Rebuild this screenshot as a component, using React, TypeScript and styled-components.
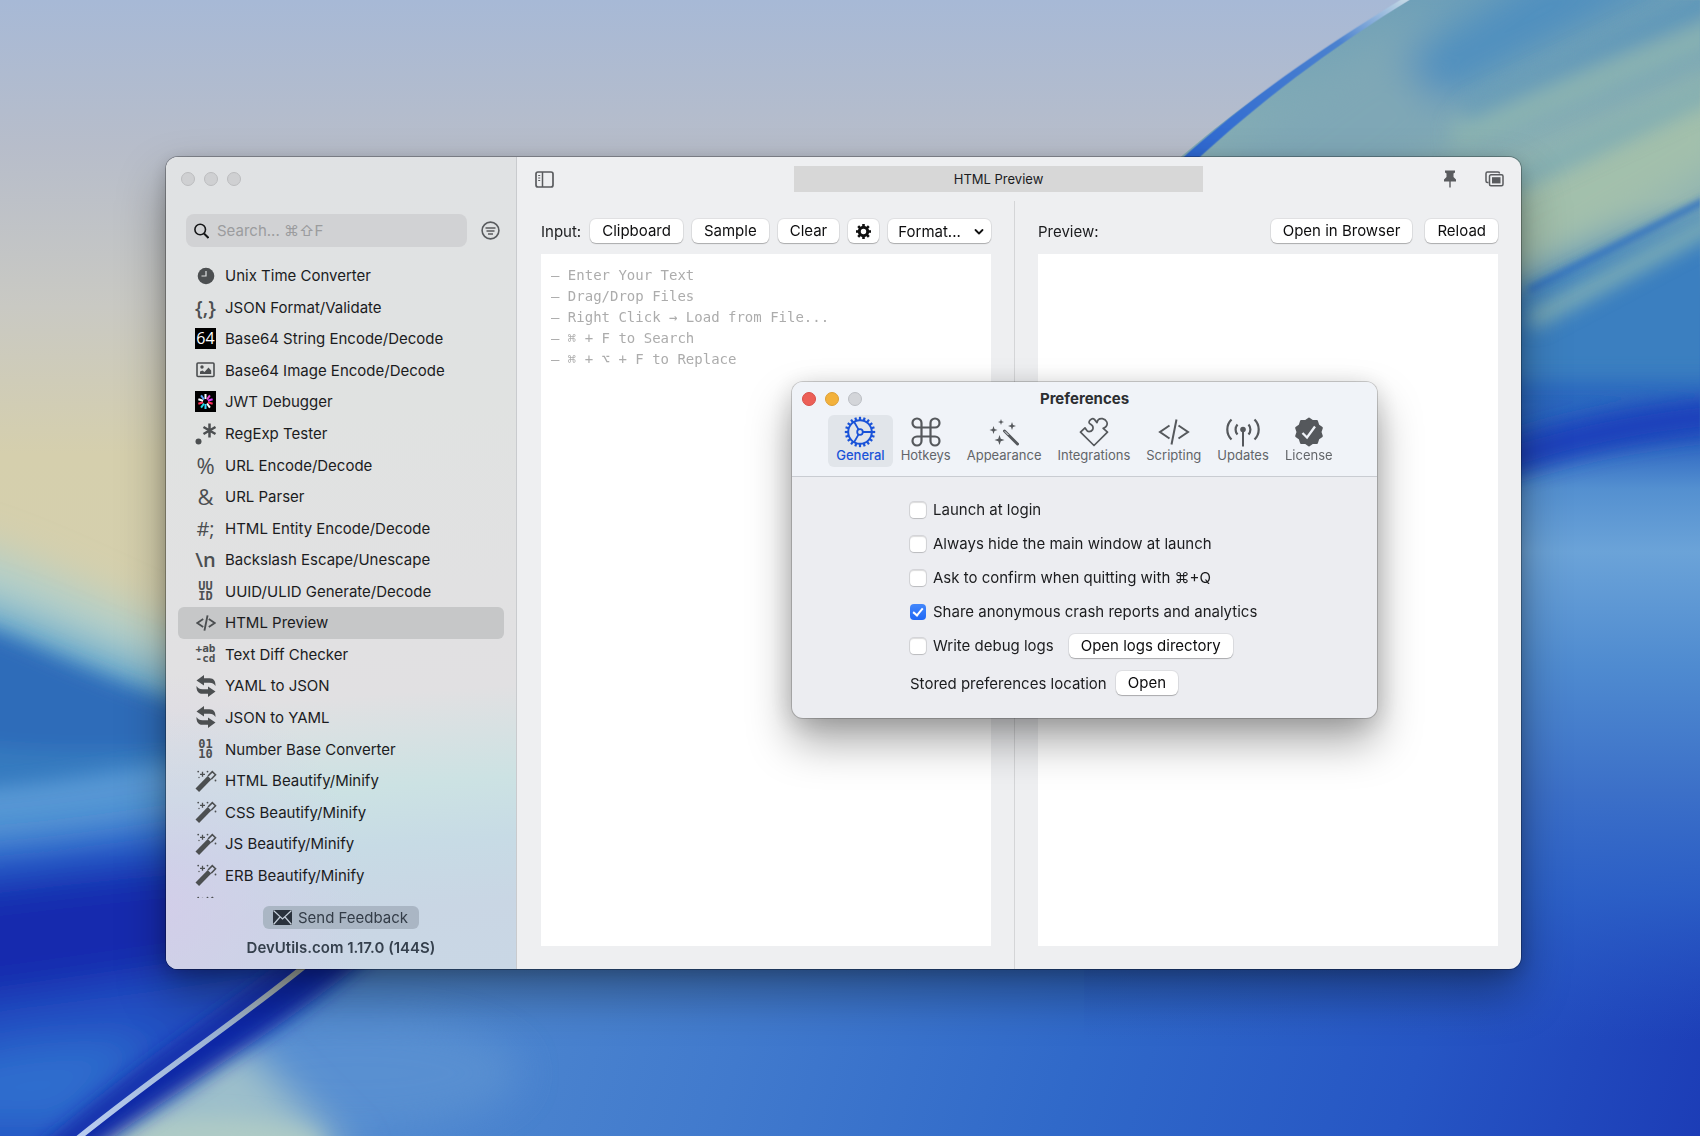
import React, { useState } from 'react';
import styled, { createGlobalStyle, css } from 'styled-components';

const sans = `Inter, "Liberation Sans", "DejaVu Sans", sans-serif`;
const mono = `"DejaVu Sans Mono", "Liberation Mono", monospace`;

const GlobalStyle = createGlobalStyle`
  *, *::before, *::after { box-sizing: border-box; }
  body { margin: 0; font-family: ${sans}; font-size: 15px; color: #1b1c1e; }
  button, input, select, textarea { font: inherit; color: inherit; }
`;

/* ---------- desktop ---------- */

const Desktop = styled.div`
  position: relative;
  display: flex;
  height: 100vh;
  min-height: 900px;
  padding: 157px 179px 167px 166px;
  overflow: hidden;
  background: #3469c4;
`;

const WallpaperSvg = styled.svg`
  position: absolute;
  inset: 0;
  width: 100%;
  height: 100%;
`;

function Wallpaper() {
  return (
    <WallpaperSvg viewBox="0 0 1568 1048" preserveAspectRatio="none" aria-hidden="true">
      <defs>
        <linearGradient id="sky" x1="0" y1="0" x2="0" y2="1">
          <stop offset="0" stopColor="#a7b9d6" />
          <stop offset="0.13" stopColor="#b7bdca" />
          <stop offset="0.27" stopColor="#c9c9c3" />
          <stop offset="0.4" stopColor="#d5cfad" />
          <stop offset="0.6" stopColor="#d5d0ac" />
        </linearGradient>
        <linearGradient id="right" gradientUnits="userSpaceOnUse" x1="1480" y1="0" x2="1480" y2="960">
          <stop offset="0" stopColor="#6fa0b8" />
          <stop offset="0.19" stopColor="#8fb3b3" />
          <stop offset="0.27" stopColor="#3f80bd" />
          <stop offset="0.37" stopColor="#2c6abf" />
          <stop offset="0.42" stopColor="#2a62c0" />
          <stop offset="0.47" stopColor="#5490d0" />
          <stop offset="0.53" stopColor="#6ba3d8" />
          <stop offset="0.64" stopColor="#4f8bd0" />
          <stop offset="0.76" stopColor="#3c70c8" />
          <stop offset="0.86" stopColor="#2e64c8" stopOpacity="0.8" />
          <stop offset="1" stopColor="#2858c4" stopOpacity="0" />
        </linearGradient>
        <linearGradient id="floor" gradientUnits="userSpaceOnUse" x1="420" y1="800" x2="1568" y2="1150">
          <stop offset="0" stopColor="#4f88cf" />
          <stop offset="0.25" stopColor="#417acd" />
          <stop offset="0.5" stopColor="#3069c9" />
          <stop offset="0.75" stopColor="#2656c4" />
          <stop offset="1" stopColor="#1b3ab5" />
        </linearGradient>
        <linearGradient id="ridge" x1="0" y1="1" x2="1" y2="0">
          <stop offset="0" stopColor="#2c66d2" />
          <stop offset="0.7" stopColor="#4b82cf" />
          <stop offset="1" stopColor="#d3e4e8" />
        </linearGradient>
        <linearGradient id="thread" x1="1" y1="0" x2="0" y2="1">
          <stop offset="0" stopColor="#a9aea0" />
          <stop offset="0.4" stopColor="#9bb3d4" />
          <stop offset="1" stopColor="#b9cdf0" />
        </linearGradient>
        <filter id="b3" x="-20%" y="-20%" width="140%" height="140%"><feGaussianBlur stdDeviation="3" /></filter>
        <filter id="b9" x="-30%" y="-60%" width="160%" height="220%"><feGaussianBlur stdDeviation="9" /></filter>
        <filter id="b18" x="-40%" y="-80%" width="180%" height="260%"><feGaussianBlur stdDeviation="18" /></filter>
        <clipPath id="rightClip">
          <path d="M1300 0C1215 50 1150 92 1090 144L700 600V1048H1568V0Z" />
        </clipPath>
        <clipPath id="floorClip">
          <path d="M72 1048C150 985 215 945 280 892L500 700H1568V1048Z" />
        </clipPath>
      </defs>

      <rect width="1568" height="1048" fill="url(#sky)" />

      {/* waves along the left edge */}
      <g filter="url(#b18)">
        <path d="M-60 492C20 510 90 552 220 606V1150H-60Z" fill="#b3cfc9" />
      </g>
      <g filter="url(#b18)">
        <path d="M-60 546C20 562 90 608 220 645V1150H-60Z" fill="#5fa3cc" />
      </g>
      <g filter="url(#b9)">
        <path d="M-60 566C10 578 90 634 240 670V1150H-60Z" fill="#2f6cb9" />
        <path d="M-60 680C40 700 120 690 240 690V1150H-60Z" fill="#357abf" />
      </g>
      <g filter="url(#b9)">
        <path d="M-60 728C40 728 100 708 240 695V1150H-60Z" fill="#5797d4" />
      </g>
      <g filter="url(#b18)">
        <path d="M-60 786C40 780 120 768 240 750V1150H-60Z" fill="#2458c8" />
        <path d="M-60 818C40 810 120 792 400 780V1150H-60Z" fill="#142cae" />
        <path d="M-60 930C40 918 120 905 300 880V1150H-60Z" fill="#2150c2" />
        <path d="M-60 990C0 960 50 960 140 960L60 1040H-60Z" fill="#2d6dce" />
      </g>
      <path d="M40 1070C130 992 200 950 290 880" stroke="#1227a4" strokeWidth="16" fill="none" filter="url(#b9)" />

      {/* broad floor below the thread */}
      <g clipPath="url(#floorClip)">
        <rect y="600" width="1568" height="448" fill="url(#floor)" />
        <ellipse cx="330" cy="990" rx="150" ry="50" fill="#5b92d2" opacity="0.8" filter="url(#b18)" />
        <path d="M60 1060L215 955L330 1070Z" fill="#9dbfcb" filter="url(#b18)" />
        <ellipse cx="190" cy="1056" rx="110" ry="26" fill="#afcbc6" filter="url(#b9)" />
        <path d="M60 1054C150 985 240 940 345 850" stroke="#1128a6" strokeWidth="44" fill="none" filter="url(#b9)" />
      </g>
      <path d="M72 1050C150 987 215 945 285 888" stroke="url(#thread)" strokeWidth="5" fill="none" />

      {/* upper right fold */}
      <g clipPath="url(#rightClip)">
        <rect x="1000" width="568" height="960" fill="url(#right)" />
        <g filter="url(#b18)">
          <path d="M1060 190L1300 20L1350 120L1100 300Z" fill="#7fa7b6" />
          <path d="M1290 55L1430 -30H1560L1330 95Z" fill="#4f8fbf" />
          <path d="M1370 175L1600 60V150L1370 280Z" fill="#a3c0ac" />
        </g>
        <g filter="url(#b9)">
          <path d="M1340 112L1600 10V34L1340 140Z" fill="#8db5b0" opacity="0.8" />
          <path d="M1350 98L1600 -20V4L1350 112Z" fill="#5793ba" opacity="0.8" />
          <path d="M1380 165L1600 66V82L1380 185Z" fill="#79a9b4" opacity="0.8" />
          <path d="M1390 285L1600 180V350L1390 350Z" fill="#3a7fc0" />
          <path d="M1380 426C1450 402 1520 388 1600 382" stroke="#1c42bb" strokeWidth="34" fill="none" />
        </g>
        <path d="M1410 296L1590 200" stroke="#86b3b4" strokeWidth="16" fill="none" filter="url(#b9)" />
        <path d="M1410 268L1590 176" stroke="#3674c0" strokeWidth="6" fill="none" filter="url(#b3)" />
      </g>
      <path d="M1086 150C1150 92 1215 47 1298 -4H1306C1222 48 1162 94 1101 150Z" fill="url(#ridge)" />
    </WallpaperSvg>
  );
}

/* ---------- shared controls ---------- */

const raised = css`
  border: 0;
  border-radius: 6px;
  background: #fff;
  box-shadow: 0 0 0 1px rgba(0, 0, 0, 0.06), 0 1px 1px rgba(0, 0, 0, 0.24);
`;

const PushButton = styled.button<{ $square?: boolean }>`
  ${raised}
  display: inline-flex;
  align-items: center;
  justify-content: center;
  flex: none;
  height: 24px;
  padding: 0 ${(p) => (p.$square ? 7 : 12)}px;
  color: #0d0d0e;
  line-height: 24px;
  white-space: nowrap;
`;

const SelectWrap = styled.label`
  position: relative;
  display: block;
  flex: 1;
  svg {
    position: absolute;
    right: 7px;
    top: 9px;
    pointer-events: none;
  }
`;

const Select = styled.select`
  ${raised}
  appearance: none;
  display: block;
  width: 100%;
  height: 24px;
  padding: 0 24px 0 10px;
  color: #0d0d0e;
`;

const Lights = styled.div`
  display: flex;
  gap: 9px;
`;

const Light = styled.button<{ $fill: string; $edge: string }>`
  width: 14px;
  height: 14px;
  padding: 0;
  border: 1px solid ${(p) => p.$edge};
  border-radius: 50%;
  background: ${(p) => p.$fill};
`;

const IconButton = styled.button`
  display: inline-flex;
  align-items: center;
  justify-content: center;
  padding: 0;
  border: 0;
  background: none;
  color: #595b5e;
`;

/* ---------- main window ---------- */

const Window = styled.main`
  position: relative;
  display: flex;
  flex: 1;
  min-width: 0;
  border-radius: 12px;
  overflow: hidden;
  background: #eeeff1;
`;

const WindowFrame = styled.div`
  display: flex;
  flex: 1;
  min-width: 0;
  border-radius: 12px;
  box-shadow: 0 0 0 1px rgba(0, 0, 0, 0.28), 0 24px 48px rgba(0, 0, 0, 0.36), 0 4px 18px rgba(0, 0, 0, 0.18);
  position: relative;
`;

const Sidebar = styled.aside`
  display: flex;
  flex-direction: column;
  flex: none;
  width: 351px;
  border-right: 1px solid #c9cbce;
  background:
    radial-gradient(ellipse 200px 230px at 0 92%, rgba(212, 204, 234, 0.8), rgba(212, 204, 234, 0)),
    linear-gradient(176deg, #e0e2e4 0%, #e0e2e1 32%, #e1e1e2 54%, #e1e0e2 66%, #cce2e3 77%, #c7dbe5 84%, #c9d6e4 92%, #c9d7e5 100%);
`;

const SidebarTop = styled.div`
  height: 57px;
  padding: 15px 15px 0;
`;

const SearchRow = styled.div`
  display: flex;
  align-items: center;
  justify-content: space-between;
  padding: 0 16px 0 20px;
`;

const SearchBox = styled.label`
  display: flex;
  align-items: center;
  gap: 8px;
  width: 281px;
  height: 33px;
  padding: 0 8px;
  border-radius: 8px;
  background: #d1d2d4;
  color: #151617;
`;

const SearchInput = styled.input`
  flex: 1;
  min-width: 0;
  padding: 0;
  border: 0;
  outline: 0;
  background: none;
  &::placeholder { color: #9b9c9e; opacity: 1; }
`;

const ToolList = styled.ul`
  display: grid;
  grid-template-rows: repeat(20, 1fr) 7px;
  flex: 1;
  min-height: 0;
  margin: 13px 0 0;
  padding: 0 12px;
  overflow: hidden;
  list-style: none;
`;

const ToolItem = styled.li`
  display: grid;
  min-height: 0;
`;

const ToolButton = styled.button<{ $active?: boolean }>`
  display: flex;
  align-items: center;
  gap: 8px;
  min-width: 0;
  padding: 0 16px;
  border: 0;
  border-radius: 6px;
  background: ${(p) => (p.$active ? '#c6c7c8' : 'transparent')};
  text-align: left;
  white-space: nowrap;
`;

const PeekButton = styled(ToolButton)`
  align-items: flex-start;
  height: 31px;
  padding-top: 5px;
`;

const IconSlot = styled.span`
  display: flex;
  align-items: center;
  justify-content: center;
  flex: none;
  width: 23px;
  height: 22px;
  color: #4c4f51;
`;

const Glyph = styled.span<{ $size: number; $weight?: number; $mono?: boolean; $stack?: boolean; $invert?: boolean }>`
  display: block;
  font-family: ${(p) => (p.$mono ? mono : `"Open Sans", ${sans}`)};
  font-size: ${(p) => p.$size}px;
  font-weight: ${(p) => p.$weight || 400};
  line-height: ${(p) => (p.$stack ? 10 : 21)}px;
  white-space: pre;
  text-align: center;
  ${(p) => p.$invert && css`
    width: 21px;
    height: 21px;
    background: #000;
    color: #fff;
  `}
`;

const SidebarFooter = styled.footer`
  display: flex;
  flex-direction: column;
  align-items: center;
  height: 71px;
  padding: 8px 0 0;
`;

const FeedbackButton = styled.button`
  display: flex;
  align-items: center;
  gap: 6px;
  height: 23px;
  margin-bottom: 9px;
  padding: 0 11px 0 10px;
  border: 0;
  border-radius: 6px;
  background: #aab6c4;
  color: #333c47;
`;

const Version = styled.a`
  color: #35404d;
  font-size: 15px;
  font-weight: 600;
  line-height: 20px;
  text-decoration: none;
`;

const Workspace = styled.section`
  display: flex;
  flex-direction: column;
  flex: 1;
  min-width: 0;
`;

const Toolbar = styled.header`
  display: flex;
  align-items: center;
  justify-content: space-between;
  height: 44px;
  padding: 0 17px 0 18px;
`;

const TitleTab = styled.h1`
  width: 409px;
  margin: 0;
  background: #d7d7d7;
  font-size: 13px;
  font-weight: 400;
  line-height: 26px;
  text-align: center;
`;

const ToolbarActions = styled.div`
  display: flex;
  align-items: center;
  gap: 28px;
`;

const Panes = styled.div`
  display: grid;
  grid-template-columns: 497fr 507fr;
  flex: 1;
  min-height: 0;
`;

const Pane = styled.section<{ $divided?: boolean }>`
  display: flex;
  flex-direction: column;
  gap: 11px;
  min-width: 0;
  padding: 18px 23px 23px ${(p) => (p.$divided ? 23 : 24)}px;
  border-left: ${(p) => (p.$divided ? '1px solid #d4d5d7' : '0')};
`;

const PaneControls = styled.div<{ $gap: number }>`
  display: flex;
  align-items: center;
  gap: ${(p) => p.$gap}px;
  height: 24px;
`;

const PaneLabel = styled.label<{ $grow?: boolean }>`
  flex: ${(p) => (p.$grow ? 1 : 'none')};
  padding-top: 1px;
`;

const InputArea = styled.textarea`
  flex: 1;
  width: 100%;
  padding: 11px 10px;
  border: 0;
  outline: 0;
  resize: none;
  background: #fff;
  font-family: ${mono};
  font-size: 14px;
  line-height: 21px;
  &::placeholder { color: #acacac; opacity: 1; }
`;

const PreviewArea = styled.output`
  display: block;
  flex: 1;
  background: #fff;
`;

/* ---------- preferences window ---------- */

const Dialog = styled.section`
  position: absolute;
  left: 792px;
  top: 382px;
  width: 585px;
  border-radius: 11px;
  box-shadow: 0 0 0 1px rgba(0, 0, 0, 0.18), 0 24px 44px rgba(0, 0, 0, 0.34), 0 4px 26px rgba(0, 0, 0, 0.16);
  background: #ecedf1;
`;

const DialogHeader = styled.header`
  border-bottom: 1px solid #c9ccd2;
  border-radius: 11px 11px 0 0;
  background: #f0f3f8;
`;

const DialogTitleBar = styled.div`
  display: grid;
  grid-template-columns: 1fr auto 1fr;
  align-items: center;
  height: 33px;
  padding: 0 10px;
`;

const DialogTitle = styled.h2`
  margin: 0;
  color: #2c2e31;
  font-size: 15px;
  font-weight: 700;
  line-height: 20px;
`;

const Tabs = styled.nav`
  display: flex;
  justify-content: center;
  padding-bottom: 9px;
`;

const Tab = styled.button<{ $active?: boolean }>`
  display: flex;
  flex-direction: column;
  align-items: center;
  min-width: 64px;
  height: 52px;
  padding: 1px 8px 0;
  border: 0;
  border-radius: 6px;
  background: ${(p) => (p.$active ? '#e1e5ea' : 'transparent')};
  color: ${(p) => (p.$active ? '#1a53d8' : '#626569')};
  font-size: 13px;
  font-weight: ${(p) => (p.$active ? 500 : 400)};
  line-height: 14px;
  svg { color: ${(p) => (p.$active ? '#1a53d8' : '#55585c')}; }
`;

const TabIcon = styled.span`
  display: flex;
  align-items: center;
  justify-content: center;
  height: 32px;
`;

const DialogBody = styled.div`
  padding: 16px 24px 18px 118px;
`;

const PrefRow = styled.div<{ $last?: boolean }>`
  display: flex;
  align-items: center;
  gap: ${(p) => (p.$last ? 9 : 15)}px;
  height: 34px;
  margin-top: ${(p) => (p.$last ? 3 : 0)}px;
`;

const CheckLabel = styled.label`
  display: flex;
  align-items: center;
  gap: 7px;
  line-height: 20px;
`;

const Checkbox = styled.input`
  appearance: none;
  position: relative;
  width: 16px;
  height: 16px;
  margin: 0;
  border-radius: 4px;
  background: #fff;
  box-shadow: 0 0 0 1px rgba(0, 0, 0, 0.1), 0 1px 1px rgba(0, 0, 0, 0.12), inset 0 1px 1px rgba(0, 0, 0, 0.14);
  &:checked {
    background: linear-gradient(#4387fb, #1f68f5);
    box-shadow: none;
  }
  &:checked::before {
    content: '';
    position: absolute;
    left: 5px;
    top: 2px;
    width: 6px;
    height: 10px;
    border: solid #fff;
    border-width: 0 2px 2px 0;
    transform: rotate(40deg);
  }
`;

/* ---------- icons ---------- */

const ClockIcon = () => (
  <svg width="18" height="18" viewBox="0 0 18 18">
    <circle cx="9" cy="9" r="8.300" fill="currentColor" />
    <path d="M9 4v5H4.500" fill="none" stroke="#dfe1e2" strokeWidth="1.200" />
  </svg>
);

const PictureIcon = () => (
  <svg width="19" height="16" viewBox="0 0 19 16">
    <rect x="1" y="1" width="17" height="13.500" rx="1" fill="none" stroke="currentColor" strokeWidth="1.600" />
    <circle cx="6" cy="5" r="1.700" fill="currentColor" />
    <path d="M4 12V9.500L6.500 8.500 8.500 10 12.500 5.500 15.200 8.500V12Z" fill="currentColor" />
  </svg>
);

const jwtColors = ['#ffffff', '#f04bd8', '#d93bff', '#ff2f55', '#ffffff', '#38d5ff', '#20e0e8', '#ff2f55', '#ffffff', '#5aa8ff'];
const JwtIcon = () => (
  <svg width="21" height="21" viewBox="0 0 21 21">
    <rect width="21" height="21" fill="#000" />
    {jwtColors.map((c, i) => (
      <path key={i} d="M10.500 3v5" stroke={c} strokeWidth="2" transform={`rotate(${i * 36} 10.500 10.500)`} />
    ))}
  </svg>
);

const RegexIcon = () => (
  <svg width="22" height="22" viewBox="0 0 22 22">
    <circle cx="3.500" cy="18.500" r="3" fill="currentColor" />
    <g stroke="currentColor" strokeWidth="2.500">
      <path d="M14.500 0.500v14M8.500 4l12 7M20.500 4l-12 7" />
    </g>
  </svg>
);

const CodeIcon = ({ w, h, s }: { w: number; h: number; s: number }) => (
  <svg width={w} height={h} viewBox="0 0 32 26" preserveAspectRatio="none">
    <path d="M11.500 6.500L2 13l9.500 6.500M20.500 6.500l9.500 6.500-9.500 6.500M18.500 0.500L13.500 25.500" fill="none" stroke="currentColor" strokeWidth={s} />
  </svg>
);

const swapArrow = 'M0.500 5.500L8 0V3.200H13.500C18 3.200 19.700 6.500 19.500 11C17.800 8.500 16.500 7.800 13.500 7.800H8V10.500Z';
const SwapIcon = () => (
  <svg width="20" height="22" viewBox="0 0 20 22" fill="currentColor">
    <path d={swapArrow} />
    <path d={swapArrow} transform="rotate(180 10 11)" />
  </svg>
);

const WandIcon = () => (
  <svg width="22" height="22" viewBox="0 0 22 22">
    <path d="M2.300 20.200L14.500 7.800" stroke="currentColor" strokeWidth="5" />
    <path d="M13 6L17.300 1.600 20.500 4.700 16.200 9.200" fill="none" stroke="currentColor" strokeWidth="1.600" />
    <path d="M7.500 1.800v5M5 4.300h5" stroke="currentColor" strokeWidth="1.300" />
    <g fill="currentColor">
      <circle cx="3.200" cy="1.600" r="0.900" /><circle cx="12.500" cy="1.600" r="0.900" />
      <circle cx="20.500" cy="10.500" r="0.900" /><circle cx="4" cy="7.500" r="0.700" />
    </g>
  </svg>
);

const SearchIcon = () => (
  <svg width="15" height="16" viewBox="0 0 15 16" fill="none" stroke="currentColor" strokeWidth="1.600">
    <circle cx="6.200" cy="6.500" r="5.300" />
    <path d="M10 10.500L14.500 15" strokeWidth="2" />
  </svg>
);

const FilterIcon = () => (
  <svg width="19" height="19" viewBox="0 0 19 19" fill="none" stroke="currentColor" strokeWidth="1.600">
    <circle cx="9.500" cy="9.500" r="8.400" />
    <path d="M4.500 7h10M5.500 10h8M7 13h5" />
  </svg>
);

const MailIcon = () => (
  <svg width="19" height="15" viewBox="0 0 19 15">
    <rect width="19" height="15" fill="#2a323c" />
    <path d="M0.500 0.500L9.500 9 18.500 0.500M0.500 14.500L7 7M18.500 14.500L12 7" fill="none" stroke="#c4ced9" strokeWidth="1.200" />
  </svg>
);

const PanelIcon = () => (
  <svg width="19" height="17" viewBox="0 0 19 17" fill="none" stroke="currentColor">
    <rect x="1" y="1" width="17" height="15" rx="2" strokeWidth="1.700" />
    <path d="M7.500 1v15" strokeWidth="1.500" />
    <path d="M3.200 4.500h2M3.200 7h2M3.200 9.500h2" strokeWidth="1.100" />
  </svg>
);

const PinIcon = () => (
  <svg width="14" height="18" viewBox="0 0 14 18" fill="currentColor">
    <path d="M2 0.500H12V2.500L10.500 3.500V7L13 9.500V11.500H1V9.500L3.500 7V3.500L2 2.500Z" />
    <path d="M6.300 11H7.700V17L7 18 6.300 17Z" />
  </svg>
);

const StackIcon = () => (
  <svg width="19" height="16" viewBox="0 0 19 16" fill="none" stroke="currentColor" strokeWidth="1.500">
    <path d="M3.500 11.500H2.500A1.500 1.500 0 0 1 1 10V2.500A1.500 1.500 0 0 1 2.500 1H13A1.500 1.500 0 0 1 14.500 2.500" />
    <rect x="4.500" y="3.800" width="13.500" height="11" rx="1.500" />
    <rect x="7" y="6.200" width="8.500" height="6.200" fill="currentColor" stroke="none" />
  </svg>
);

const GearIcon = () => (
  <svg width="17" height="17" viewBox="0 0 17 17">
    <circle cx="8.500" cy="8.500" r="4.200" fill="none" stroke="#111" strokeWidth="3" />
    {[0, 45, 90, 135, 180, 225, 270, 315].map((a) => (
      <path key={a} d="M8.500 1V4" stroke="#111" strokeWidth="2.600" transform={`rotate(${a} 8.500 8.500)`} />
    ))}
  </svg>
);

const ChevronIcon = () => (
  <svg width="10" height="8" viewBox="0 0 10 8" fill="none" stroke="#111" strokeWidth="1.800" strokeLinecap="round" strokeLinejoin="round">
    <path d="M1.500 2L5 5.500 8.500 2" />
  </svg>
);

const CogIcon = () => (
  <svg width="32" height="32" viewBox="0 0 32 32" fill="none" stroke="currentColor">
    <circle cx="16" cy="16" r="11.800" strokeWidth="2" />
    {Array.from({ length: 20 }, (_, i) => (
      <path key={i} d="M16 0.800V4" strokeWidth="2.200" transform={`rotate(${i * 18} 16 16)`} />
    ))}
    <circle cx="16" cy="16" r="2.800" strokeWidth="1.800" />
    <path d="M18.800 16H27.500M14.600 13.600L10.200 6M14.600 18.400L10.200 26" strokeWidth="1.800" />
  </svg>
);

const CommandIcon = () => (
  <svg width="30" height="30" viewBox="0 0 30 30" fill="none" stroke="currentColor" strokeWidth="2.200">
    <path d="M10.500 6v18a4.500 4.500 0 1 1-4.500-4.500h18a4.500 4.500 0 1 1-4.500 4.500V6a4.500 4.500 0 1 1 4.500 4.500H6A4.500 4.500 0 1 1 10.500 6Z" />
  </svg>
);

const star = (x: number, y: number, r: number) => {
  const k = r / 4;
  return `M${x} ${y - r}L${x + k} ${y - k}L${x + r} ${y}L${x + k} ${y + k}L${x} ${y + r}L${x - k} ${y + k}L${x - r} ${y}L${x - k} ${y - k}Z`;
};
const SparkleWandIcon = () => (
  <svg width="30" height="30" viewBox="0 0 30 30">
    <path d={`${star(4.5, 13, 4)}${star(12, 5, 3)}${star(23, 9, 4)}${star(10.5, 23, 5)}`} fill="currentColor" />
    <path d="M15.500 14L28.500 27" stroke="currentColor" strokeWidth="3" strokeLinecap="round" />
    <path d="M15.800 14.300L19.500 18" stroke="#f0f3f8" strokeWidth="1" />
  </svg>
);

const PuzzleIcon = () => (
  <svg width="30" height="30" viewBox="0 0 30 30" fill="none" stroke="currentColor" strokeWidth="1.700" strokeLinejoin="round">
    <path d="M15 28.500L1.500 15.200 6 10.800C7 12 7.600 14.600 10 14.600C13.400 14.600 15 11.500 13.400 8.800C12.400 7.200 10 7 10 5.200C10.400 2.600 13.600 0.700 15.400 2.400L18 5.600C18.400 3 20.500 1.200 23.400 1.600C27.600 2.400 29.400 6.600 27.200 9.400C26.300 10.500 25.300 11 24.200 11.400L28.500 15.200Z" />
  </svg>
);

const AntennaIcon = () => (
  <svg width="34" height="30" viewBox="0 0 34 30" fill="none" stroke="currentColor" strokeWidth="2.200">
    <circle cx="17" cy="12.500" r="2.800" fill="currentColor" stroke="none" />
    <path d="M17 13V29.500" strokeWidth="2" />
    <path d="M11.500 7.500A7.500 7.500 0 0 0 11.500 17.500M22.500 7.500A7.500 7.500 0 0 1 22.500 17.500M5.500 2.500A14 14 0 0 0 5.500 22.500M28.500 2.500A14 14 0 0 1 28.500 22.500" />
  </svg>
);

const badgePath = Array.from({ length: 20 }, (_, i) => {
  const a = (i * Math.PI) / 10 - Math.PI / 2;
  const r = i % 2 ? 11.5 : 13.5;
  return `${i ? 'L' : 'M'}${15 + r * Math.cos(a)} ${15 + r * Math.sin(a)}`;
}).join('') + 'Z';
const BadgeIcon = () => (
  <svg width="30" height="30" viewBox="0 0 30 30">
    <path d={badgePath} fill="currentColor" stroke="currentColor" strokeWidth="2" strokeLinejoin="round" />
    <path d="M8.500 16L13 20.500 21 9.500" fill="none" stroke="#f0f3f8" strokeWidth="2.300" />
  </svg>
);

/* ---------- content ---------- */

const tools: { name: string; icon: React.ReactNode }[] = [
  { name: 'Unix Time Converter', icon: <ClockIcon /> },
  { name: 'JSON Format/Validate', icon: <Glyph $size={20} $weight={600}>{'{,}'}</Glyph> },
  { name: 'Base64 String Encode/Decode', icon: <Glyph $size={16} $invert>64</Glyph> },
  { name: 'Base64 Image Encode/Decode', icon: <PictureIcon /> },
  { name: 'JWT Debugger', icon: <JwtIcon /> },
  { name: 'RegExp Tester', icon: <RegexIcon /> },
  { name: 'URL Encode/Decode', icon: <Glyph $size={22}>%</Glyph> },
  { name: 'URL Parser', icon: <Glyph $size={22}>&amp;</Glyph> },
  { name: 'HTML Entity Encode/Decode', icon: <Glyph $size={20}>#;</Glyph> },
  { name: 'Backslash Escape/Unescape', icon: <Glyph $size={20} $weight={600}>\n</Glyph> },
  { name: 'UUID/ULID Generate/Decode', icon: <Glyph $size={12} $weight={700} $mono $stack>{'UU\nID'}</Glyph> },
  { name: 'HTML Preview', icon: <CodeIcon w={20} h={16} s={3} /> },
  { name: 'Text Diff Checker', icon: <Glyph $size={11} $weight={700} $mono $stack>{'+ab\n-cd'}</Glyph> },
  { name: 'YAML to JSON', icon: <SwapIcon /> },
  { name: 'JSON to YAML', icon: <SwapIcon /> },
  { name: 'Number Base Converter', icon: <Glyph $size={12} $weight={700} $mono $stack>{'01\n10'}</Glyph> },
  { name: 'HTML Beautify/Minify', icon: <WandIcon /> },
  { name: 'CSS Beautify/Minify', icon: <WandIcon /> },
  { name: 'JS Beautify/Minify', icon: <WandIcon /> },
  { name: 'ERB Beautify/Minify', icon: <WandIcon /> },
];

const prefTabs = [
  { name: 'General', icon: <CogIcon /> },
  { name: 'Hotkeys', icon: <CommandIcon /> },
  { name: 'Appearance', icon: <SparkleWandIcon /> },
  { name: 'Integrations', icon: <PuzzleIcon /> },
  { name: 'Scripting', icon: <CodeIcon w={32} h={26} s={2} /> },
  { name: 'Updates', icon: <AntennaIcon /> },
  { name: 'License', icon: <BadgeIcon /> },
];

const options = [
  { id: 'login', label: 'Launch at login', on: false },
  { id: 'hide', label: 'Always hide the main window at launch', on: false },
  { id: 'quit', label: 'Ask to confirm when quitting with ⌘+Q', on: false },
  { id: 'share', label: 'Share anonymous crash reports and analytics', on: true },
  { id: 'debug', label: 'Write debug logs', on: false },
];

const placeholder = [
  '— Enter Your Text',
  '— Drag/Drop Files',
  '— Right Click → Load from File...',
  '— ⌘ + F to Search',
  '— ⌘ + ⌥ + F to Replace',
].join('\n');

function Preferences() {
  const [tab, setTab] = useState('General');
  return (
    <Dialog role="dialog" aria-labelledby="prefs-title">
      <DialogHeader>
        <DialogTitleBar>
          <Lights>
            <Light aria-label="Close preferences" $fill="#ec5f57" $edge="#d84f48" />
            <Light aria-label="Minimize preferences" $fill="#f3b13b" $edge="#dc9f35" />
            <Light aria-label="Zoom preferences" $fill="#d3d5d9" $edge="#bcbfc4" />
          </Lights>
          <DialogTitle id="prefs-title">Preferences</DialogTitle>
        </DialogTitleBar>
        <Tabs>
          {prefTabs.map((t) => (
            <Tab key={t.name} $active={t.name === tab} onClick={() => setTab(t.name)}>
              <TabIcon>{t.icon}</TabIcon>
              {t.name}
            </Tab>
          ))}
        </Tabs>
      </DialogHeader>
      <DialogBody>
        {options.map((o) => (
          <PrefRow key={o.id}>
            <CheckLabel htmlFor={o.id}>
              <Checkbox type="checkbox" id={o.id} defaultChecked={o.on} />
              {o.label}
            </CheckLabel>
            {o.id === 'debug' && <PushButton>Open logs directory</PushButton>}
          </PrefRow>
        ))}
        <PrefRow $last>
          <span>Stored preferences location</span>
          <PushButton>Open</PushButton>
        </PrefRow>
      </DialogBody>
    </Dialog>
  );
}

export default function App() {
  const [active, setActive] = useState('HTML Preview');
  return (
    <Desktop>
      <GlobalStyle />
      <Wallpaper />
      <WindowFrame>
        <Window>
          <Sidebar>
            <SidebarTop>
              <Lights>
                <Light aria-label="Close" $fill="#cfd0d2" $edge="#bcbdbf" />
                <Light aria-label="Minimize" $fill="#cfd0d2" $edge="#bcbdbf" />
                <Light aria-label="Zoom" $fill="#cfd0d2" $edge="#bcbdbf" />
              </Lights>
            </SidebarTop>
            <SearchRow>
              <SearchBox>
                <SearchIcon />
                <SearchInput type="text" aria-label="Search tools" placeholder="Search... ⌘⇧F" />
              </SearchBox>
              <IconButton aria-label="Filter"><FilterIcon /></IconButton>
            </SearchRow>
            <ToolList>
              {tools.map((t) => (
                <ToolItem key={t.name}>
                  <ToolButton $active={t.name === active} onClick={() => setActive(t.name)}>
                    <IconSlot>{t.icon}</IconSlot>
                    {t.name}
                  </ToolButton>
                </ToolItem>
              ))}
              <ToolItem>
                <PeekButton aria-label="More tools">
                  <IconSlot><WandIcon /></IconSlot>
                </PeekButton>
              </ToolItem>
            </ToolList>
            <SidebarFooter>
              <FeedbackButton><MailIcon />Send Feedback</FeedbackButton>
              <Version href="#about">DevUtils.com 1.17.0 (144S)</Version>
            </SidebarFooter>
          </Sidebar>

          <Workspace>
            <Toolbar>
              <IconButton aria-label="Toggle sidebar"><PanelIcon /></IconButton>
              <TitleTab>HTML Preview</TitleTab>
              <ToolbarActions>
                <IconButton aria-label="Pin window"><PinIcon /></IconButton>
                <IconButton aria-label="New window"><StackIcon /></IconButton>
              </ToolbarActions>
            </Toolbar>
            <Panes>
              <Pane>
                <PaneControls $gap={9}>
                  <PaneLabel htmlFor="source">Input:</PaneLabel>
                  <PushButton>Clipboard</PushButton>
                  <PushButton>Sample</PushButton>
                  <PushButton>Clear</PushButton>
                  <PushButton $square aria-label="Settings"><GearIcon /></PushButton>
                  <SelectWrap>
                    <Select aria-label="Format" defaultValue="format">
                      <option value="format">Format...</option>
                    </Select>
                    <ChevronIcon />
                  </SelectWrap>
                </PaneControls>
                <InputArea id="source" placeholder={placeholder} spellCheck={false} />
              </Pane>
              <Pane $divided>
                <PaneControls $gap={13}>
                  <PaneLabel htmlFor="preview" $grow>Preview:</PaneLabel>
                  <PushButton>Open in Browser</PushButton>
                  <PushButton>Reload</PushButton>
                </PaneControls>
                <PreviewArea id="preview" />
              </Pane>
            </Panes>
          </Workspace>
        </Window>
      </WindowFrame>
      <Preferences />
    </Desktop>
  );
}
